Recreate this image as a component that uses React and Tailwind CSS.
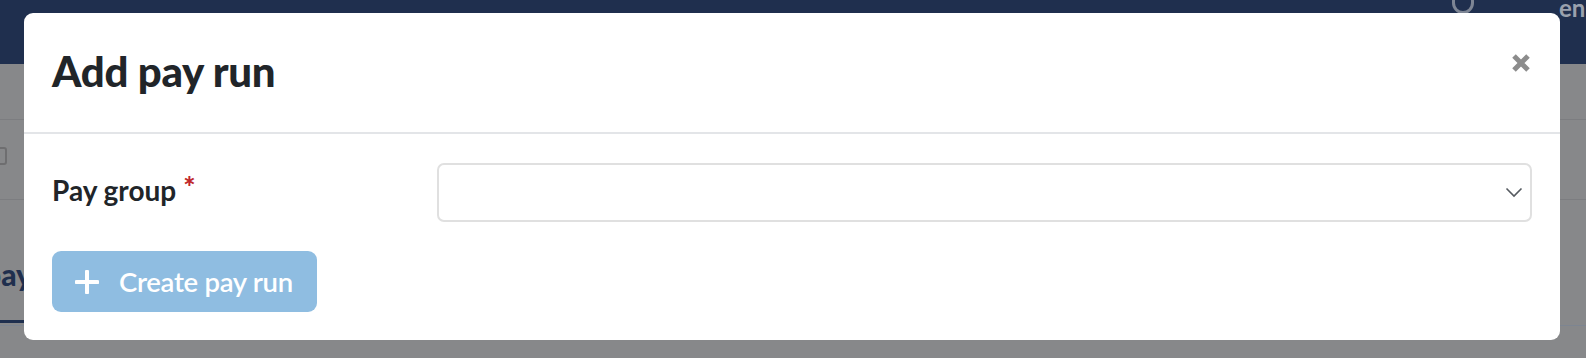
import React from "react";

export default function App() {
  return (
    <div className="relative w-[1586px] h-[358px] overflow-hidden bg-[#87888a] font-['Lato',sans-serif]">
      {/* dimmed page behind */}
      <div className="h-16 bg-[#1f2f4e] relative">
        <div className="absolute left-[1452px] top-[-10px] w-[22px] h-[24px] rounded-full border-[3px] border-[#7d8594]"></div>
        <div className="absolute left-[1559px] top-[-10px] text-[24px] font-bold text-[#9aa1ad]">en</div>
      </div>
      <div className="h-[56px] border-b border-[#7c7d80]"></div>
      <div className="h-[80px] border-b border-[#7c7d80] flex items-center">
        <div className="ml-[-9px] mt-[-8px] w-[16px] h-[18px] rounded-[3px] border-2 border-[#6e6e70]"></div>
      </div>
      <div className="h-[126px] border-b border-[#7d8591] flex items-end">
        <div className="w-[40px] ml-[-16px] border-b-[3px] border-[#1f2f4e] pb-[28px] mb-[2px]">
          <span className="text-[30px] font-black text-[#1f2f4e] leading-none">pay</span>
        </div>
      </div>

      {/* modal */}
      <div className="absolute left-[24px] top-[13px] w-[1536px] h-[327px] bg-white rounded-[9px] flex flex-col">
        <div className="h-[121px] shrink-0 flex items-center justify-between pl-7 pr-[29px] border-b-2 border-[#e3e5e8]">
          <h1 className="text-[42px] font-black text-[#212529] tracking-[-0.3px] mt-[-2px]">Add pay run</h1>
          <svg width="20" height="20" viewBox="0 0 20 20" className="mt-[-19px]">
            <path d="M3 3 L17 17 M17 3 L3 17" stroke="#8c8c8c" strokeWidth="5" strokeLinecap="butt" />
          </svg>
        </div>
        <div className="pt-[29px] px-7 pb-7 flex flex-col">
          <div className="flex items-center">
            <div className="w-[385px] shrink-0 flex items-start text-[28px] font-bold text-[#212529] mt-[-5px]">
              <span>Pay group</span>
              <span className="ml-[7px] text-[#c0282d] text-[29px] font-black leading-none mt-[2px]">*</span>
            </div>
            <div className="flex-1 h-[59px] rounded-[7px] border-2 border-[#e0e0e0] flex items-center justify-end pr-[7px]">
              <svg width="18" height="11" viewBox="0 0 18 11">
                <path d="M1.5 1.5 L9 9 L16.5 1.5" fill="none" stroke="#555a60" strokeWidth="1.6" />
              </svg>
            </div>
          </div>
          <div className="mt-[29px]">
            <button className="h-[61px] w-[265px] rounded-[9px] bg-[#8fbde1] flex items-center pl-[23px] text-white text-[27.5px] font-semibold">
              <svg width="24" height="24" viewBox="0 0 24 24" className="mr-[20px] shrink-0">
                <path d="M12 1.5 V22.5 M1.5 12 H22.5" stroke="white" strokeWidth="4" strokeLinecap="round" />
              </svg>
              <span className="tracking-[-0.3px] whitespace-nowrap">Create pay run</span>
            </button>
          </div>
        </div>
      </div>
    </div>
  );
}
